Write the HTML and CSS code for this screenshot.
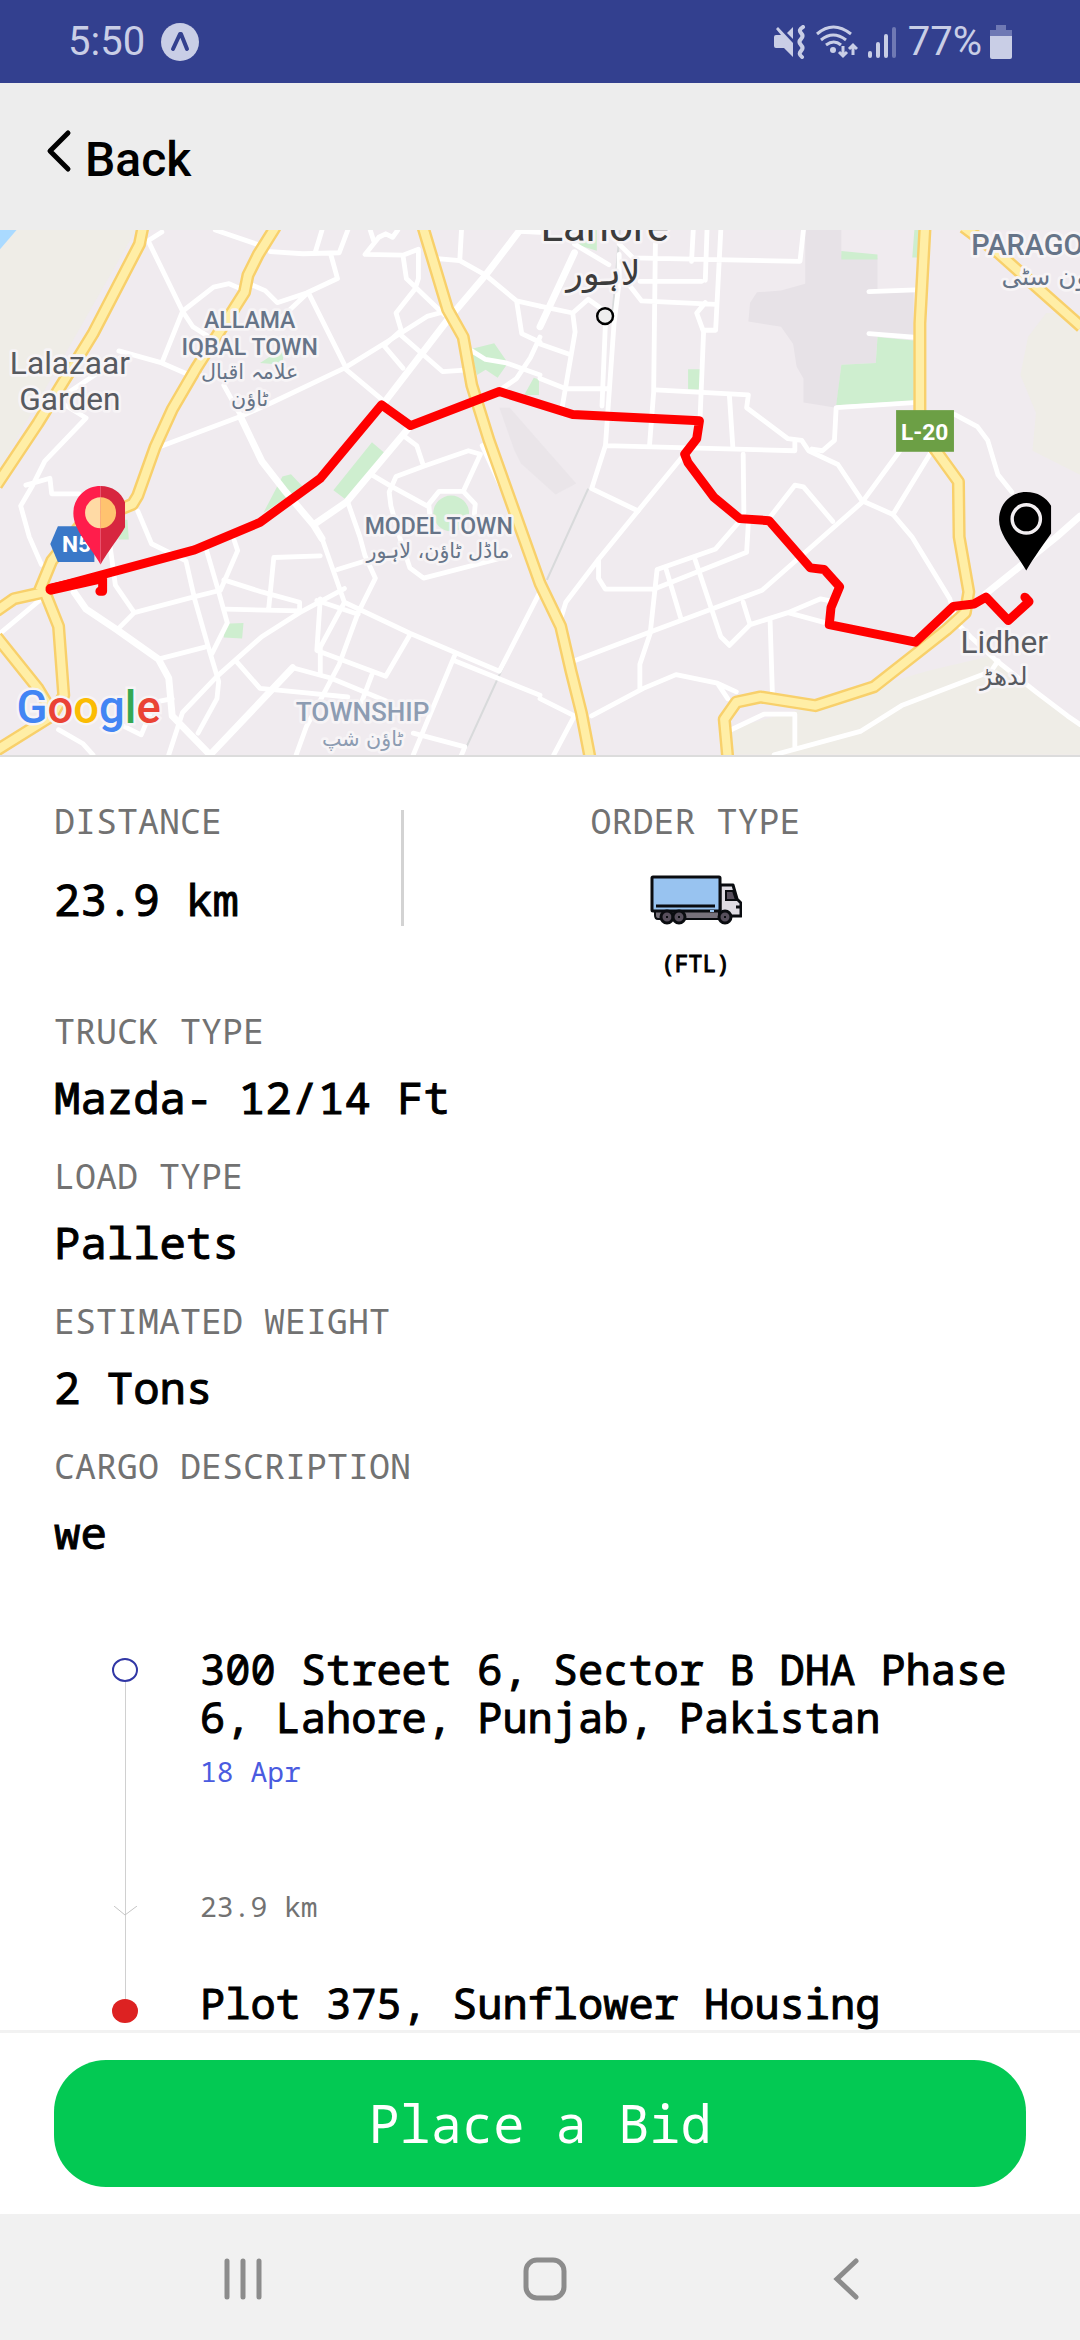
FILE: index.html
```html
<!DOCTYPE html>
<html lang="en">
<head>
    <meta charset="UTF-8">
    <meta name="viewport" content="width=device-width, initial-scale=1">
    <title>Order details</title>
    <link rel="stylesheet" href="styles.css">
</head>
<body>
    <div class="status">
        <span class="time">5:50</span>
        <svg class="expo" width="38" height="38" viewBox="0 0 38 38">
            <circle cx="19" cy="19" r="19" fill="#c9cee6"/>
            <path d="M12 26l7-15h1l6 15" fill="none" stroke="#33408f" stroke-width="4" stroke-linecap="round" stroke-linejoin="round"/>
        </svg>
        <div class="icons">
            <svg width="32" height="34" viewBox="0 0 32 34">
                <path d="M0 12q0-2 2-2h5L2 4l2-2 15 16v14L10 23H2q-2 0-2-2z" fill="#c9cee6"/>
                <path d="M13 8l6-6v12z" fill="#c9cee6"/>
                <path d="M29 2q-5 3-2 6t0 6q-3 3 0 6t0 6q-3 3 1 6" fill="none" stroke="#c9cee6" stroke-width="4" stroke-linecap="round"/>
            </svg>
            <svg width="42" height="34" viewBox="0 0 42 34">
                <path d="M1 9q16-14 34 0M5 15q12-10 25 0M10 20q8-6 15 0" fill="none" stroke="#c9cee6" stroke-width="3"/>
                <circle cx="17" cy="25" r="3" fill="#c9cee6"/>
                <path d="M27 21v10M23 27l4 4 4-4M37 30V20M33 24l4-4 4 4" fill="none" stroke="#c9cee6" stroke-width="3"/>
            </svg>
            <svg width="28" height="34" viewBox="0 0 28 34">
                <path d="M2 28v3M10 19v12M18 11v20" stroke="#c9cee6" stroke-width="4" stroke-linecap="round"/>
                <path d="M26 4v27" stroke="#6f79b4" stroke-width="4" stroke-linecap="round"/>
            </svg>
        </div>
        <span class="level">77%</span>
        <svg width="22" height="34" viewBox="0 0 22 34">
            <path d="M6 0h10v5h6v8H0V5h6z" fill="#6f79b4"/>
            <path d="M0 11h22v21q0 2-2 2H2q-2 0-2-2z" fill="#c9cee6"/>
        </svg>
    </div>

    <header class="header">
        <a href="#" class="back">
            <svg width="26" height="44" viewBox="0 0 26 44">
                <path d="M22 4L4 22l18 18" fill="none" stroke="#000" stroke-width="5" stroke-linecap="round" stroke-linejoin="round"/>
            </svg>
            <span>Back</span>
        </a>
    </header>

    <main class="content">
        <svg class="map" viewBox="0 29 3136 1525">
            <!-- land -->
            <rect y="29" width="3136" height="1525" fill="#f0ebef"/>
            <g fill="#efede7">
                <path d="M0 29H395L0 720z"/>
                <path d="M3038 270L2985 340 2963 450 3008 560 2998 670 3136 740V270z"/>
                <path d="M2113 1553L2128 1475 2368 1410 2538 1355 2690 1310 2878 1265 3136 1465V1553z"/>
            </g>
            <path d="M0 29H48L0 85z" fill="#aadaff"/>
            <path d="M2338 29h105v71l105 10v90l105 10v130l-105 0-5 75-100 5-15 125-95-15v-70l-20-35-10-65-35-50-95-15 5-55 20-30 70-5 70-20z" fill="#e7e2e7"/>
            <path d="M1450 545l30 0 193 220-60 32-100-90 -20-40z" fill="#e7e2e7" opacity=".7"/>
            <g fill="#ceeecf">
                <path d="M2443 420l100-5 5-75 105 10v175l-225 13z"/>
                <path d="M2443 90l105 10v15H2443zM1998 433h35v59h-35zM1673 29h60v60l-50-15zM2655 29h14v80h-20z"/>
                <path d="M1365 375l70-17 40 57-30 43-35-23-25 15zM1550 458l15 5v45l-43 0zM1080 645l35 30-110 137-37-27zM820 745l25-7 35 37-115 75zM652 1172l55-2-4 45-53-3zM755 415l70-45-5 50zM350 870l20 0 4 58h-30z"/>
                <circle cx="1310" cy="852" r="52"/>
            </g>
            <g class="rail-track">
                <path d="M1708 780L1588 1045M1510 1190L1350 1540M1800 29L1776 300"/>
            </g>
            <!-- streets -->
            <g class="street">
                <path d="M470 35L430 60 530 265 560 310 600 335M625 29L760 75M785 92L880 98 985 95 1010 29M915 95L935 29M960 98L980 170 890 212 805 240 770 205 735 190M530 265L470 415M530 265L620 195 665 185 700 200M895 210L1000 420M890 215L800 300M345 380L470 415 550 450M650 480L700 570"/>
                <path d="M460 660L700 570 790 530 1000 430 1130 350 1240 280 1295 265M1000 430L1120 530M1510 33L1568 36M1270 112L1335 118 1410 160 1500 235 1568 250M1335 118L1340 29M1500 235L1515 330 1568 355"/>
                <path d="M1075 29L1085 60M1155 29L1140 50 1120 40 1100 50 1060 100 1170 102 1180 170 1290 275M1170 102L1215 85V170L1205 200 1150 270 1165 320 1115 365 1170 430M1165 335L1285 440 1360 435M1370 380L1410 405 1470 415 1568 450M1568 340L1540 400 1500 460 1450 495"/>
                <path d="M1170 625L1210 655 1230 715 1150 745 1130 790 1135 830 1160 920 1190 1010 1230 1040 1480 975M1230 715L1360 670 1395 680 1345 788 1380 825 1375 880M1345 788H1275L1245 825 1250 880M1400 655L1490 850M1080 740L1130 770 1240 830"/>
                <path d="M1010 820L1045 920 1060 975 1090 1040 1040 1140 985 1290 890 1470 860 1553M980 1015L1060 990M780 1130L795 980 930 975M1000 1110L1190 1200 1450 1310 1568 1080M935 925L1000 1110M650 1045L760 1080 870 1110V1135L655 1130M920 1105L1040 1145"/>
                <path d="M600 960L635 1080 660 1170 615 1260M400 845L440 940 540 990 565 1100 605 1240 635 1340 630 1390 575 1490M320 950L335 1060 390 1140 340 1190M390 1140L560 1095 640 1075 690 960 680 930M460 1275L595 1240"/>
                <path d="M490 1553L530 1430 630 1325 760 1210 870 1140 1000 1070M685 1280L755 1360 860 1370 1010 1385M850 1300L960 1330 1130 1400M930 1100L920 1250 1120 1325 1190 1205M1000 1110L930 1240V1320M1080 1320L1050 1400M1320 1265L1200 1553M1320 1280L1568 1380M1200 1490L1350 1530 1340 1553"/>
                <path d="M0 1200L120 1100M185 535L250 575 130 700 95 770 60 830 85 920 120 1000M350 400L200 500M75 770L145 750 150 795H230M500 1390L450 1400 410 1495 340 1460M170 1480L240 1520 270 1553"/>
                <path d="M1798 70L1838 110 2323 120 2333 29M1668 70L1768 130M1903 70L1898 500 1886 655M2013 29L2008 120M2053 29L2048 175M2093 29L2078 320H2043M1858 178H2038M1828 190L1863 235 2078 245M2048 240L2023 270 2043 325 2033 570"/>
                <path d="M1568 250L1663 270 1708 230 1750 260M1663 270L1670 325 1633 540M1568 360L1653 390M1568 460L1643 490H1763M1758 300L1748 540M1798 100V180L1783 300 1758 655 1718 780 1853 845M1758 655L2308 670V640M1903 493L2173 508 2168 545 2288 635 2328 640 2348 670 2433 710 2503 815 2593 855 2648 920 2758 1100 2778 1170 2818 1210 2888 1275 3008 1370 3100 1440 3136 1465"/>
                <path d="M2118 510L2128 660M2358 665L2388 670 2423 640 2428 545 2653 530M2158 680L2160 850M1983 685L1738 985 1643 1110 1623 1175M1738 985V1040L1758 1072H1898M2238 860L2308 770 2333 775 2418 875M2593 855L2703 675M2143 880L2078 955 1908 1015 1888 1200 1858 1290V1360"/>
                <path d="M1668 1280L1878 1200 2213 1075 2503 820 2613 670M1898 1072L2168 965 2173 880M1933 1010L1978 1160M2018 985L2093 1210 2118 1235 2178 1175 2158 1110M2178 1175L2288 1140 2383 1100 2408 1105M2288 1140L2398 1170M2236 1160L2243 1380"/>
                <path d="M1718 1440L1868 1360 1963 1320 2083 1345 2138 1370M2083 1345L2113 1390M2123 1480L2218 1435H2308V1535M2248 1553L2498 1485 2618 1410 2878 1310 2898 1280M2523 208L2658 203M2523 330L2653 340M2773 565L2838 600 2868 640 2898 740 2938 790M1568 1390L1668 1440 1608 1553"/>
            </g>
            <g class="street wide">
                <path d="M1108 540L1300 290 1410 160 1510 29M1190 600L1005 820 910 885M700 575L760 700 830 790 910 885 935 925M215 1080L250 1130 340 1190 460 1275 490 1330 500 1440 610 1553 850 1300M1568 310L1668 95M2863 1085L3068 920 3136 860"/>
            </g>
            <!-- highways -->
            <g class="highway">
                <path d="M415 20L405 70 270 330 110 590 -10 770"/>
                <path d="M800 20L750 100 720 160 710 210 640 320 570 430 500 550 450 660 400 800 385 825 350 840 230 890 150 990 115 1075"/>
                <path d="M-10 1135L40 1100 130 1080 170 1180 185 1380 150 1440 -10 1540M-10 1210L110 1360 140 1410"/>
                <path d="M1228 20L1300 260 1345 340 1370 480 1420 640 1568 1055 1628 1180 1658 1310 1688 1430 1713 1560"/>
                <path d="M2686 20L2671 300V600L2718 670 2783 760 2785 920 2813 1080 2803 1140 2748 1190 2538 1355 2368 1410 2208 1385 2138 1400 2103 1450 2113 1560"/>
                <path d="M2798 20L2898 95 3140 310"/>
            </g>
            <g class="highway fill">
                <path d="M415 20L405 70 270 330 110 590 -10 770"/>
                <path d="M800 20L750 100 720 160 710 210 640 320 570 430 500 550 450 660 400 800 385 825 350 840 230 890 150 990 115 1075"/>
                <path d="M-10 1135L40 1100 130 1080 170 1180 185 1380 150 1440 -10 1540M-10 1210L110 1360 140 1410"/>
                <path d="M1228 20L1300 260 1345 340 1370 480 1420 640 1568 1055 1628 1180 1658 1310 1688 1430 1713 1560"/>
                <path d="M2686 20L2671 300V600L2718 670 2783 760 2785 920 2813 1080 2803 1140 2748 1190 2538 1355 2368 1410 2208 1385 2138 1400 2103 1450 2113 1560"/>
                <path d="M2798 20L2898 95 3140 310"/>
            </g>
            <!-- places -->
            <g class="place town">
                <text x="203" y="447">Lalazaar</text>
                <text x="203" y="553">Garden</text>
                <text x="2916" y="1258">Lidher</text>
                <text x="2915" y="1350" class="ur">لدھڑ</text>
            </g>
            <g class="place area">
                <text x="725" y="314">ALLAMA</text>
                <text x="725" y="391">IQBAL TOWN</text>
                <text x="725" y="462" class="ur">علامہ اقبال</text>
                <text x="725" y="540" class="ur">ٹاؤن</text>
                <text x="1274" y="912">MODEL TOWN</text>
                <text x="1272" y="982" class="ur">ماڈل ٹاؤن، لاہور</text>
            </g>
            <g class="place area dim">
                <text x="1053" y="1454">TOWNSHIP</text>
                <text x="1053" y="1526" class="ur">ٹاؤن شپ</text>
            </g>
            <g class="place area edge">
                <text x="2820" y="103">PARAGON</text>
                <text x="2908" y="190" class="ur">پیراگون سٹی</text>
            </g>
            <g class="place city">
                <text x="1756" y="62">Lahore</text>
                <text x="1752" y="188" class="ur">لاہور</text>
            </g>
            <circle cx="1757" cy="279" r="23" fill="#eee" stroke="#000" stroke-width="7"/>
            <path d="M168 889h106v104H168l-22-52z" fill="#3a78c8"/>
            <text x="180" y="964" class="sign">N5</text>
            <rect x="2602" y="552" width="168" height="121" fill="#6c9f45"/>
            <text x="2616" y="640" class="sign">L-20</text>
            <!-- route -->
            <path class="route" d="M290 1078H298V1035M148 1070L565 958 755 878 930 750 1108 537 1192 597 1450 498 1663 565 2031 583 2023 635 1988 680 1998 705 2073 805 2148 867 2233 873 2353 1010 2393 1015 2438 1065 2413 1125 2408 1175 2658 1226 2768 1122 2828 1115 2863 1095 2928 1163 2988 1108 2976 1095"/>
            <path d="M148 1072L290 1040" class="route start"/>
            <path d="M292 772c-46 0-79 36-79 80 0 48 46 90 79 148z" fill="#ff1d4b"/>
            <path d="M292 772c34 0 60 18 71 48v72c-15 28-50 70-71 108z" fill="#d7263f"/>
            <path d="M292 805a45 45 0 0 0 0 90z" fill="#ffdaa5"/>
            <path d="M292 805a45 45 0 0 1 0 90z" fill="#ffc36f"/>
            <path d="M2980 790c-46 0-79 36-79 80 0 48 46 90 79 148 21-38 52-78 72-108v-80c-14-25-40-40-72-40z" fill="#000"/>
            <circle cx="2980" cy="868" r="41" fill="none" stroke="#f3eff2" stroke-width="10"/>
            <text x="48" y="1462" class="google"><tspan fill="#4285f4">G</tspan><tspan fill="#ea4335">o</tspan><tspan fill="#fbbc04">o</tspan><tspan fill="#4285f4">g</tspan><tspan fill="#34a853">l</tspan><tspan fill="#ea4335">e</tspan></text>
        </svg>

        <div class="details">
            <div class="summary">
                <dl class="distance">
                    <dt>DISTANCE</dt>
                    <dd>23.9 km</dd>
                </dl>
                <dl class="order">
                    <dt>ORDER TYPE</dt>
                    <dd>
                        <svg width="92" height="50" viewBox="0 0 92 50">
                            <path d="M5 36h64v8H8q-3 0-3-4z" fill="#77717b" stroke="#0a0c10" stroke-width="2"/>
                            <path d="M70 10h13l4 14 4 4v13H70z" fill="#dfdce3" stroke="#0a0c10" stroke-width="3" stroke-linejoin="round"/>
                            <path d="M76 16h7l3 9H76z" fill="#574f5c" stroke="#0a0c10" stroke-width="2"/>
                            <path d="M86 32h4" stroke="#0a0c10" stroke-width="3"/>
                            <rect x="2" y="2" width="68" height="34" rx="1" fill="#98c3f0" stroke="#0a0c10" stroke-width="3"/>
                            <path d="M6 31h59" stroke="#0a0c10" stroke-width="3"/>
                            <path d="M60 36h4" stroke="#98c3f0" stroke-width="2"/>
                            <g fill="#574f5c" stroke="#0a0c10" stroke-width="3">
                                <circle cx="17" cy="42" r="6"/>
                                <circle cx="29" cy="42" r="6"/>
                                <circle cx="75" cy="42" r="6"/>
                            </g>
                            <path d="M16 42h2M28 42h2M74 42h2" stroke="#0a0c10" stroke-width="2"/>
                        </svg>
                        <span>(FTL)</span>
                    </dd>
                </dl>
            </div>
            <dl class="fields">
                <div>
                    <dt>TRUCK TYPE</dt>
                    <dd>Mazda- 12/14 Ft</dd>
                </div>
                <div>
                    <dt>LOAD TYPE</dt>
                    <dd>Pallets</dd>
                </div>
                <div>
                    <dt>ESTIMATED WEIGHT</dt>
                    <dd>2 Tons</dd>
                </div>
                <div>
                    <dt>CARGO DESCRIPTION</dt>
                    <dd>we</dd>
                </div>
            </dl>
            <ol class="stops">
                <li class="stop pickup">
                    <div class="rail"><i class="dot"></i><i class="line"></i></div>
                    <div class="info">
                        <h2>300 Street 6, Sector B DHA Phase 6, Lahore, Punjab, Pakistan</h2>
                        <p class="date">18 Apr</p>
                    </div>
                </li>
                <li class="stop leg">
                    <div class="rail">
                        <i class="line short"></i>
                        <svg width="25" height="10" viewBox="0 0 25 10">
                            <path d="M12 0h1v10h-1z" fill="#d0d0d0"/>
                            <path d="M1 0l11 9L24 0" fill="none" stroke="#c4c4c4"/>
                        </svg>
                        <i class="line"></i>
                    </div>
                    <div class="info">
                        <p>23.9 km</p>
                    </div>
                </li>
                <li class="stop drop">
                    <div class="rail"><i class="line short"></i><i class="dot"></i></div>
                    <div class="info">
                        <h2>Plot 375, Sunflower Housing</h2>
                    </div>
                </li>
            </ol>
        </div>
    </main>

    <div class="actions">
        <button type="button" class="bid">Place a Bid</button>
    </div>

    <nav class="navbar">
        <button type="button" aria-label="Recent apps">
            <svg width="44" height="44" viewBox="0 0 44 44">
                <path d="M6 4v36M22 4v36M38 4v36" stroke="#8c8c8c" stroke-width="5" stroke-linecap="round"/>
            </svg>
        </button>
        <button type="button" aria-label="Home">
            <svg width="44" height="44" viewBox="0 0 44 44">
                <rect x="3" y="3" width="38" height="38" rx="11" fill="none" stroke="#8c8c8c" stroke-width="5"/>
            </svg>
        </button>
        <button type="button" aria-label="Go back">
            <svg width="44" height="44" viewBox="0 0 44 44">
                <path d="M31 4L12 22l19 18" fill="none" stroke="#8c8c8c" stroke-width="5" stroke-linecap="round"/>
            </svg>
        </button>
    </nav>
</body>
</html>
```

FILE: styles.css
```css
*{
    box-sizing:border-box;
    padding:0;
    margin:0;
}
body{
    height:100vh;
    display:flex;
    flex-direction:column;
    background:#fff;
    color:#000;
    font-family:"Noto Sans Mono","DejaVu Sans Mono",monospace;
}
svg{
    display:block;
    flex-shrink:0;
}
button{
    border:0;
    background:none;
    font-family:inherit;
}
.status{
    height:83px;
    padding:0 68px;
    display:flex;
    align-items:center;
    background:#33408f;
    color:#c9cee6;
    font-family:Roboto,sans-serif;
    font-size:40px;
}
.expo{
    margin-left:16px;
}
.icons{
    display:flex;
    gap:10px;
    margin-left:auto;
}
.level{
    margin:0 8px 0 12px;
}
.header{
    height:147px;
    padding:46px 46px 0;
    background:#ededed;
}
.back{
    display:inline-flex;
    gap:13px;
    color:#000;
    text-decoration:none;
    font-family:Roboto,sans-serif;
    font-size:48px;
    font-weight:500;
    line-height:62px;
}
.content{
    flex:1;
    min-height:0;
    overflow:hidden;
}
.map{
    width:100%;
    border-bottom:2px solid #dcdcdc;
}
.rail-track{
    fill:none;
    stroke:#d8dadb;
    stroke-width:6px;
}
.street{
    fill:none;
    stroke:#fff;
    stroke-width:14px;
    stroke-linecap:round;
    stroke-linejoin:round;
}
.wide{
    stroke-width:20px;
}
.highway{
    fill:none;
    stroke:#f8d06b;
    stroke-width:38px;
    stroke-linejoin:round;
}
.fill{
    stroke:#ffeea6;
    stroke-width:24px;
}
.place{
    text-anchor:middle;
    font-family:Roboto,"DejaVu Sans",sans-serif;
    stroke:#f7f4f6;
    stroke-width:16px;
    stroke-linejoin:round;
    paint-order:stroke;
}
.ur{
    font-family:"DejaVu Sans",sans-serif;
    font-weight:400;
}
.town{
    font-size:92px;
    fill:#575a60;
}
.town .ur{
    font-size:72px;
}
.area{
    font-size:67px;
    font-weight:500;
    fill:#667488;
}
.area .ur{
    font-size:60px;
}
.dim{
    font-size:76px;
    fill:#8d9cb2;
}
.edge{
    font-size:84px;
    text-anchor:start;
}
.edge .ur{
    font-size:72px;
}
.city{
    font-size:122px;
    fill:#3c3c3c;
}
.city .ur{
    font-size:100px;
}
.sign{
    font-family:Roboto,sans-serif;
    font-size:66px;
    font-weight:700;
    fill:#fff;
}
.route{
    fill:none;
    stroke:#f00;
    stroke-width:26px;
    stroke-linecap:round;
    stroke-linejoin:round;
}
.start{
    stroke-width:32px;
}
.google{
    font-family:Roboto,sans-serif;
    font-size:132px;
    font-weight:500;
    stroke:#f7f4f6;
    stroke-width:14px;
    paint-order:stroke;
}
.details{
    padding:40px 54px 0;
}
dt{
    color:#727272;
    font-size:35px;
    line-height:48px;
}
dd{
    font-size:44px;
    line-height:60px;
    -webkit-text-stroke:1px #000;
}
.summary{
    height:210px;
    display:flex;
    align-items:flex-start;
}
.distance{
    width:36%;
    display:flex;
    flex-direction:column;
    gap:24px;
    position:relative;
}
.distance::after{
    content:"";
    position:absolute;
    top:13px;
    right:0;
    width:3px;
    height:116px;
    background:#d3d3d3;
}
.order{
    width:60%;
    text-align:center;
}
.order dd{
    display:flex;
    flex-direction:column;
    align-items:center;
    gap:22px;
    padding-top:30px;
    font-size:23px;
    line-height:32px;
}
.fields{
    display:flex;
    flex-direction:column;
    gap:25px;
}
.fields dd{
    margin-top:12px;
}
.stops{
    margin-top:83px;
    list-style:none;
}
.stop{
    display:grid;
    grid-template-columns:142px 1fr;
    gap:4px;
}
.rail{
    display:flex;
    flex-direction:column;
    align-items:center;
}
.line{
    flex:1;
    width:1px;
    background:#d0d0d0;
}
.short{
    flex:none;
    height:20px;
}
.dot{
    width:26px;
    height:24px;
    border-radius:50%;
}
.pickup .rail{
    padding-top:13px;
}
.pickup .dot{
    border:2px solid #3137a5;
}
.drop .dot{
    background:#dd2222;
}
.pickup .info{
    padding-bottom:95px;
}
.leg .info{
    padding-bottom:53px;
}
.info h2{
    font-size:42px;
    font-weight:400;
    line-height:48px;
    -webkit-text-stroke:1px #000;
}
.info p{
    color:#727272;
    font-size:28px;
    line-height:40px;
}
.info .date{
    margin-top:10px;
    color:#4a5be0;
}
.actions{
    padding:27px 54px;
    border-top:3px solid #f2f2f2;
    background:#fff;
}
.bid{
    width:100%;
    height:127px;
    border-radius:52px;
    background:#03c953;
    color:#fff;
    font-size:52px;
    line-height:60px;
    padding-bottom:2px;
}
.navbar{
    height:126px;
    padding:4px 82px 0 92px;
    display:grid;
    grid-template-columns:repeat(3,1fr);
    justify-items:center;
    align-items:center;
    background:#f1f1f1;
}
```
